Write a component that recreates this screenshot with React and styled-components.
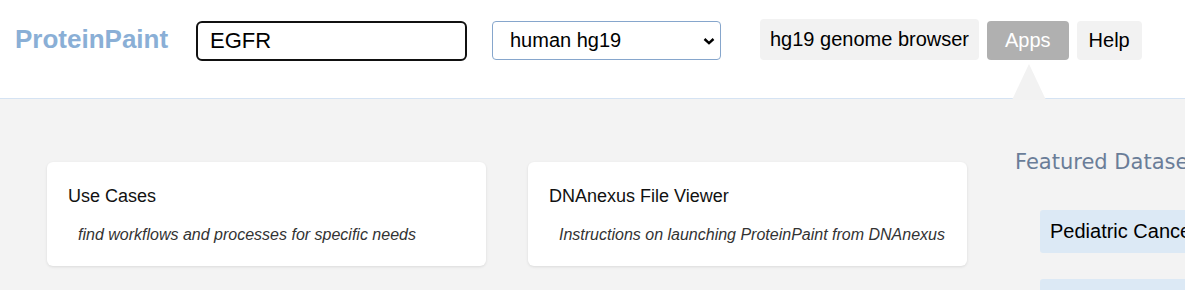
import React from "react";
import styled, { createGlobalStyle } from "styled-components";

const GlobalStyle = createGlobalStyle`
  html, body {
    margin: 0;
    padding: 0;
    background: #f3f3f3;
    font-family: "Liberation Sans", Arial, sans-serif;
    overflow: hidden;
  }
`;

const Page = styled.div`
  width: 1185px;
  height: 290px;
  overflow: hidden;
  background: #f3f3f3;
`;

const Header = styled.header`
  position: relative;
  display: flex;
  align-items: flex-start;
  height: 99px;
  box-sizing: border-box;
  padding: 21px 0 0 15px;
  background: #fff;
  border-bottom: 1px solid #d5e3f3;
`;

const Logo = styled.div`
  margin-top: 3px;
  font-size: 26px;
  font-weight: bold;
  color: #8aafd6;
  width: 181px;
`;

const SearchInput = styled.input`
  box-sizing: border-box;
  width: 271px;
  height: 40px;
  padding: 0 12px;
  border: 2px solid #111;
  border-radius: 6px;
  font-family: "Liberation Sans", Arial, sans-serif;
  font-size: 22px;
  color: #000;
  outline: none;
`;

const SelectBox = styled.div`
  box-sizing: border-box;
  display: flex;
  align-items: center;
  justify-content: space-between;
  margin-left: 25px;
  width: 229px;
  height: 39px;
  padding: 0 4px 0 17px;
  border: 1px solid #86a6cc;
  border-radius: 4px;
  font-size: 20px;
  color: #000;
`;

const NavButtons = styled.nav`
  display: flex;
  gap: 8px;
  margin-left: 39px;
  margin-top: -2px;
`;

const NavButton = styled.div`
  position: relative;
  box-sizing: border-box;
  height: ${(p) => (p.$tall ? 41 : 39)}px;
  margin-top: ${(p) => (p.$tall ? 0 : 2)}px;
  padding: 0 ${(p) => p.$pad || 10}px;
  display: flex;
  align-items: center;
  border-radius: 4px;
  font-size: 20px;
  background: ${(p) => (p.$active ? "#b0b0b0" : "#f2f2f2")};
  color: ${(p) => (p.$active ? "#fff" : "#000")};
`;

const Pointer = styled.div`
  position: absolute;
  left: 25px;
  top: 43px;
  width: 0;
  height: 0;
  border-left: 17px solid transparent;
  border-right: 17px solid transparent;
  border-bottom: 36px solid #f2f2f2;
  z-index: 2;
`;

const Main = styled.main`
  display: flex;
  align-items: flex-start;
  padding: 63px 0 0 47px;
`;

const Cards = styled.div`
  display: flex;
  gap: 42px;
`;

const Card = styled.div`
  box-sizing: border-box;
  width: 439px;
  height: 104px;
  padding: 24px 0 0 21px;
  background: #fff;
  border-radius: 6px;
  box-shadow: 0 1px 3px rgba(0, 0, 0, 0.1);
`;

const CardTitle = styled.div`
  font-size: 18px;
  color: #111;
`;

const CardText = styled.div`
  margin: 19px 0 0 10px;
  font-size: 16px;
  font-style: italic;
  color: #333;
`;

const Featured = styled.section`
  margin-left: 48px;
  margin-top: -12px;
  white-space: nowrap;
`;

const FeaturedTitle = styled.div`
  font-family: "DejaVu Sans", Verdana, sans-serif;
  font-size: 21px;
  color: #6a7d98;
`;

const DatasetList = styled.div`
  display: flex;
  flex-direction: column;
  gap: 26px;
  margin: 36px 0 0 25px;
`;

const Dataset = styled.div`
  box-sizing: border-box;
  width: 200px;
  height: 43px;
  padding-left: 10px;
  display: flex;
  align-items: center;
  border-radius: 3px;
  background: #dce9f5;
  font-size: 20px;
  color: #000;
`;

const Chevron = () => (
  <svg width="14" height="10" viewBox="0 0 14 10">
    <path d="M2.5 3 L7 7.2 L11.5 3" fill="none" stroke="#000" strokeWidth="2.4" />
  </svg>
);

export default function App() {
  return (
    <Page>
      <GlobalStyle />
      <Header>
        <Logo>ProteinPaint</Logo>
        <SearchInput defaultValue="EGFR" />
        <SelectBox>
          <span>human hg19</span>
          <Chevron />
        </SelectBox>
        <NavButtons>
          <NavButton $tall>hg19 genome browser</NavButton>
          <NavButton $active $pad={18}>
            Apps
            <Pointer />
          </NavButton>
          <NavButton $pad={12}>Help</NavButton>
        </NavButtons>
      </Header>
      <Main>
        <Cards>
          <Card>
            <CardTitle>Use Cases</CardTitle>
            <CardText>find workflows and processes for specific needs</CardText>
          </Card>
          <Card>
            <CardTitle>DNAnexus File Viewer</CardTitle>
            <CardText>Instructions on launching ProteinPaint from DNAnexus</CardText>
          </Card>
        </Cards>
        <Featured>
          <FeaturedTitle>Featured Datasets</FeaturedTitle>
          <DatasetList>
            <Dataset>Pediatric Cancer</Dataset>
            <Dataset />
          </DatasetList>
        </Featured>
      </Main>
    </Page>
  );
}
